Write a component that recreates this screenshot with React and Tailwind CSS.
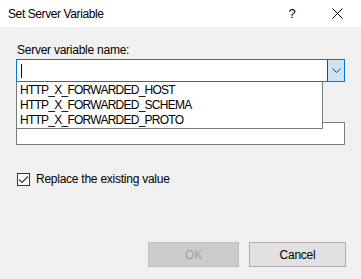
export default function App() {
  return (
    <div
      className="w-[361px] h-[279px] bg-[#f0f0f0] flex flex-col text-[12px] text-black overflow-hidden tracking-[-0.25px]"
      style={{ fontFamily: '"Liberation Sans", Arial, sans-serif' }}
    >
      {/* title bar */}
      <div className="h-[27px] bg-white flex items-center pl-2 shrink-0">
        <span className="flex-1 tracking-[-0.4px]">Set Server Variable</span>
        <span className="w-[10px] text-center mr-[35px] text-[13px]">?</span>
        <svg width="11" height="11" viewBox="0 0 11 11" className="mr-[18px]">
          <path d="M0.5 0.5L10.5 10.5M10.5 0.5L0.5 10.5" stroke="#000" strokeWidth="1" />
        </svg>
      </div>

      <div className="relative flex-1 flex flex-col px-4 pb-3">
        <label className="mt-[16px] leading-[15px] pl-[1px]">Server variable name:</label>

        {/* combo */}
        <div className="mt-[1px] h-[23px] border border-[#0078d7] bg-white flex">
          <div className="flex-1 flex items-center pl-[4px]">
            <div className="w-px h-[14px] bg-black" />
          </div>
          <div className="w-[17px] border-l border-[#005499] bg-[#cce4f7] flex items-center justify-center">
            <svg width="9" height="5" viewBox="0 0 9 5">
              <path d="M0.5 0.5L4.5 4.5L8.5 0.5" fill="none" stroke="#404040" strokeWidth="1" />
            </svg>
          </div>
        </div>

        {/* value field (covered by dropdown list) */}
        <div className="mt-[40px] h-[23px] border border-[#7a7a7a] bg-white" />

        {/* checkbox */}
        <div className="mt-[27px] flex items-center gap-[6px] pl-[1px]">
          <div className="w-[13px] h-[13px] border border-[#333] bg-white flex items-center justify-center">
            <svg width="11" height="9" viewBox="0 0 11 9">
              <path d="M1 4.5L4 7.5L10 1.5" fill="none" stroke="#333" strokeWidth="1.2" />
            </svg>
          </div>
          <span className="leading-[15px]">Replace the existing value</span>
        </div>

        {/* buttons */}
        <div className="mt-auto flex justify-end gap-[10px] mr-[-1px]">
          <button className="w-[91px] h-[25px] bg-[#cccccc] border border-[#bfbfbf] text-[#a0a0a0]">OK</button>
          <button className="w-[97px] h-[25px] bg-[#e1e1e1] border border-[#adadad] text-black">Cancel</button>
        </div>

        {/* dropdown list */}
        <div className="absolute left-4 top-[55px] w-[307px] h-[47px] bg-white border-x border-b border-[#7a7a7a] pt-px pl-[3px] tracking-[-0.75px]">
          <div className="leading-[15px]">HTTP_X_FORWARDED_HOST</div>
          <div className="leading-[15px]">HTTP_X_FORWARDED_SCHEMA</div>
          <div className="leading-[15px]">HTTP_X_FORWARDED_PROTO</div>
        </div>
      </div>
    </div>
  );
}
